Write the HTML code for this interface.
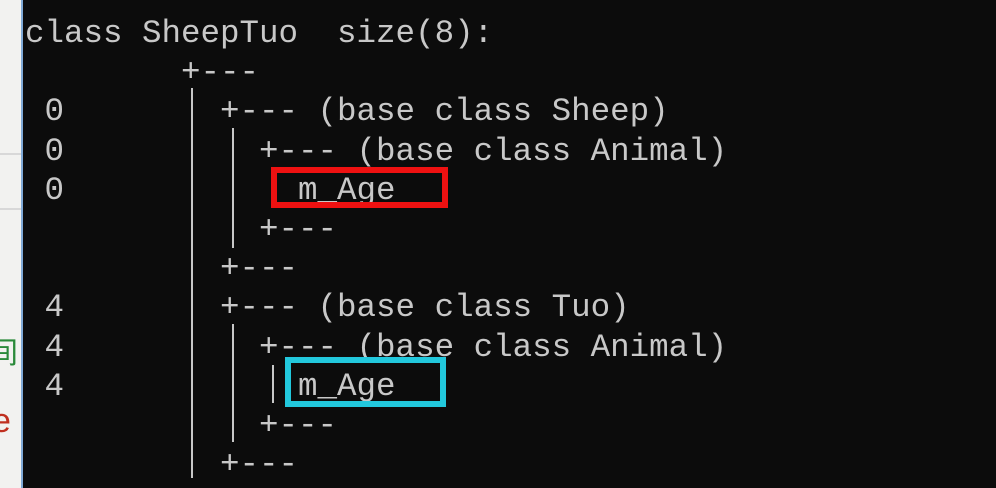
<!DOCTYPE html>
<html><head><meta charset="utf-8"><style>
html,body{margin:0;padding:0;}
body{width:996px;height:488px;overflow:hidden;background:#0c0c0c;position:relative;}
#left{position:absolute;left:0;top:0;width:21px;height:488px;background:#f2f2f0;border-right:2px solid #7fa9d6;}
pre{position:absolute;left:25px;top:14px;margin:0;font-family:"Liberation Mono",monospace;font-size:32.5px;line-height:39.2px;color:#c8c8c8;}
.box{position:absolute;box-sizing:border-box;border:6px solid;}
.v{position:absolute;width:2px;background:#c8c8c8;}
</style></head><body>
<div id="left">
<div style="position:absolute;left:0;top:153px;width:21px;height:2px;background:#d8d8d8"></div>
<div style="position:absolute;left:0;top:208px;width:21px;height:2px;background:#d8d8d8"></div>
<div style="position:absolute;left:-12px;top:328px;font:30px 'Noto Sans CJK SC',sans-serif;color:#2a8a3a">间</div>
<div style="position:absolute;left:-8px;top:402px;font:34px 'Liberation Sans',sans-serif;color:#c03020">e</div>
</div>
<pre>class SheepTuo  size(8):
        +---
 0        +--- (base class Sheep)
 0          +--- (base class Animal)
 0            m_Age
            +---
          +---
 4        +--- (base class Tuo)
 4          +--- (base class Animal)
 4            m_Age
            +---
          +---</pre>
<div class="v" style="left:191px;top:88px;height:390px"></div>
<div class="v" style="left:232px;top:128px;height:120px"></div>
<div class="v" style="left:232px;top:324px;height:118px"></div>
<div class="v" style="left:272px;top:365px;height:38px"></div>
<div class="box" style="left:271px;top:167px;width:177px;height:41px;border-color:#ee1111"></div>
<div class="box" style="left:285px;top:357px;width:161px;height:50px;border-color:#22c8dd"></div>
</body></html>
